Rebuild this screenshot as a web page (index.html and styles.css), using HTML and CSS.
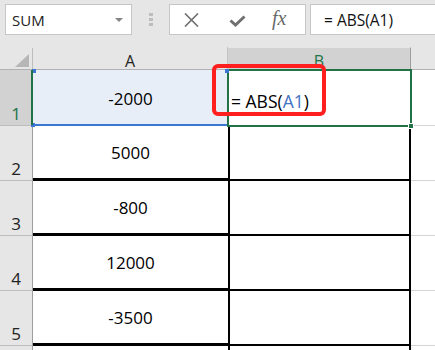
FILE: index.html
```html
<!DOCTYPE html>
<html>
<head>
<meta charset="utf-8">
<link rel="stylesheet" href="styles.css">
</head>
<body>
<div class="toolbar">
  <div class="namebox"><span class="nb-text">SUM</span><span class="caret"></span></div>
  <div class="grip"><i></i><i></i><i></i></div>
  <div class="fbtns">
    <svg class="ico-x" width="15" height="14" viewBox="0 0 15 14"><path d="M1 0.5 L14 13.5 M14 0.5 L1 13.5" stroke="#6e6e6e" stroke-width="1.6" fill="none"/></svg>
    <svg class="ico-v" width="17" height="12" viewBox="0 0 17 12"><path d="M1.5 5.5 L6.5 10 L15.5 1.5" stroke="#707070" stroke-width="3" fill="none"/></svg>
    <span class="fx">fx</span>
  </div>
  <div class="formula">= ABS(A1)</div>
</div>
<div class="sheet">
  <div class="corner"><span class="tri"></span></div>
  <div class="ch">A</div>
  <div class="ch ch-sel">B</div>
  <div class="ch ch-c"></div>

  <div class="rh rh-sel">1</div>
  <div class="c a a1">-2000</div>
  <div class="c b1"><span>=&nbsp;ABS(<span class="ref">A1</span>)</span></div>
  <div class="c cc"></div>

  <div class="rh">2</div>
  <div class="c a">5000</div>
  <div class="c b"></div>
  <div class="c cc"></div>

  <div class="rh">3</div>
  <div class="c a">-800</div>
  <div class="c b"></div>
  <div class="c cc"></div>

  <div class="rh">4</div>
  <div class="c a">12000</div>
  <div class="c b"></div>
  <div class="c cc"></div>

  <div class="rh">5</div>
  <div class="c a">-3500</div>
  <div class="c b"></div>
  <div class="c cc"></div>

  <div class="rh"></div>
  <div class="c a"></div>
  <div class="c b"></div>
  <div class="c cc"></div>

  <div class="selbox"></div>
  <div class="fill-handle"></div>
  <div class="refline"></div>
  <div class="dot dot-tl"></div>
  <div class="dot dot-tr"></div>
  <div class="dot dot-bl"></div>
  <div class="rowmark"></div>
  <div class="redbox"></div>
</div>
</body>
</html>
```
FILE: styles.css
```css
* { box-sizing: border-box; }
html, body { margin: 0; padding: 0; }
body {
  width: 435px;
  height: 350px;
  overflow: hidden;
  background: #ffffff;
  font-family: "Open Sans", "Noto Sans", sans-serif;
  color: #000;
}
.toolbar {
  height: 47px;
  background: #e6e6e6;
  display: flex;
  align-items: flex-start;
  padding: 4px 0 0 5px;
}
.namebox {
  width: 127px;
  height: 31px;
  background: #fff;
  border: 1px solid #c6c6c6;
  display: flex;
  align-items: center;
  justify-content: space-between;
  padding: 0 8px 0 6px;
}
.nb-text { font-size: 15px; color: #222; }
.caret {
  width: 0; height: 0;
  border-left: 4px solid transparent;
  border-right: 4px solid transparent;
  border-top: 4px solid #858585;
  margin-top: 1px;
}
.grip {
  width: 37px;
  height: 31px;
  display: flex;
  flex-direction: column;
  align-items: center;
  justify-content: center;
  gap: 2px;
}
.grip i { display: block; width: 4px; height: 3px; background: #bdbdbd; }
.fbtns {
  width: 137px;
  height: 31px;
  background: #fff;
  border: 1px solid #c6c6c6;
  display: flex;
  align-items: center;
  padding-left: 14px;
}
.ico-x { margin-right: 30px; }
.ico-v { margin-right: 26px; margin-top: 2px; }
.fx {
  font-family: "Liberation Serif", "DejaVu Serif", serif;
  font-style: italic;
  font-size: 20px;
  color: #6a6a6a;
  margin-top: -2px;
}
.formula {
  margin-left: 4px;
  flex: 1;
  height: 31px;
  background: #fff;
  border: 1px solid #c6c6c6;
  border-right: none;
  display: flex;
  align-items: center;
  padding-left: 13px;
  font-size: 15.5px;
  color: #111;
}
.sheet {
  position: relative;
  display: grid;
  grid-template-columns: 33px 195px 183px 1fr;
  grid-template-rows: 23px 56px 55px 55px 55px 55px 20px;
  background: #fff;
}
.corner {
  background: #e6e6e6;
  border-bottom: 1px solid #b1b1b1;
  position: relative;
}
.corner::after {
  content: "";
  position: absolute;
  right: 0; top: 1px; bottom: 0;
  width: 1px;
  background: #bdbdbd;
}
.tri {
  position: absolute;
  left: 15px; top: 7px;
  width: 14px; height: 13px;
  background: #b6b6b6;
  clip-path: polygon(100% 0, 100% 100%, 0 100%);
}
.ch {
  background: #e6e6e6;
  border-bottom: 1px solid #b1b1b1;
  border-right: 1px solid #c4c4c4;
  display: flex;
  align-items: center;
  justify-content: center;
  font-size: 16px;
  color: #222;
  padding-top: 5px;
}
.ch-sel {
  background: #d2d2d2;
  color: #217346;
  border-right: 1px solid #9e9e9e;
  border-top: 1px solid #e6e6e6;
}
.ch-c { border-right: none; }
.rh {
  background: #e6e6e6;
  border-right: 1px solid #9e9e9e;
  border-bottom: 1px solid #bdbdbd;
  display: flex;
  align-items: flex-end;
  justify-content: center;
  font-size: 17px;
  line-height: 1;
  padding-bottom: 3px;
  color: #222;
}
.rh-sel { background: #d2d2d2; color: #217346; }
.c {
  display: flex;
  align-items: center;
  font-size: 17px;
}
.a {
  justify-content: center;
  border-bottom: 3px solid #000;
}
.a1 { background: #e8eef8; border-bottom: none; }
.b {
  border-left: 2px solid #000;
  border-right: 2px solid #000;
  border-bottom: 2px solid #000;
}
.b1 { padding: 5px 0 0 3px; font-size: 17.5px; }
.ref { color: #4472c4; }
.cc { border-bottom: 1px solid #d4d4d4; }
.selbox {
  position: absolute;
  left: 227px; top: 22px;
  width: 185px; height: 58px;
  border: 2px solid #217346;
}
.fill-handle {
  position: absolute;
  left: 408px; top: 76px;
  width: 6px; height: 6px;
  background: #217346;
  border: 1px solid #fff;
}
.refline {
  position: absolute;
  left: 33px; top: 77px;
  width: 194px; height: 2px;
  background: #3b76d0;
}
.dot {
  position: absolute;
  width: 4px; height: 4px;
  background: #3b76d0;
}
.dot-tl { left: 32px; top: 22px; }
.dot-tr { left: 225px; top: 22px; }
.dot-bl { left: 31px; top: 76px; }
.rowmark {
  position: absolute;
  left: 31px; top: 23px;
  width: 2px; height: 55px;
  background: #217346;
}
.redbox {
  position: absolute;
  left: 212px; top: 17px;
  width: 114px; height: 52px;
  border: 4px solid #ff1f1f;
  border-radius: 6px;
}
```
